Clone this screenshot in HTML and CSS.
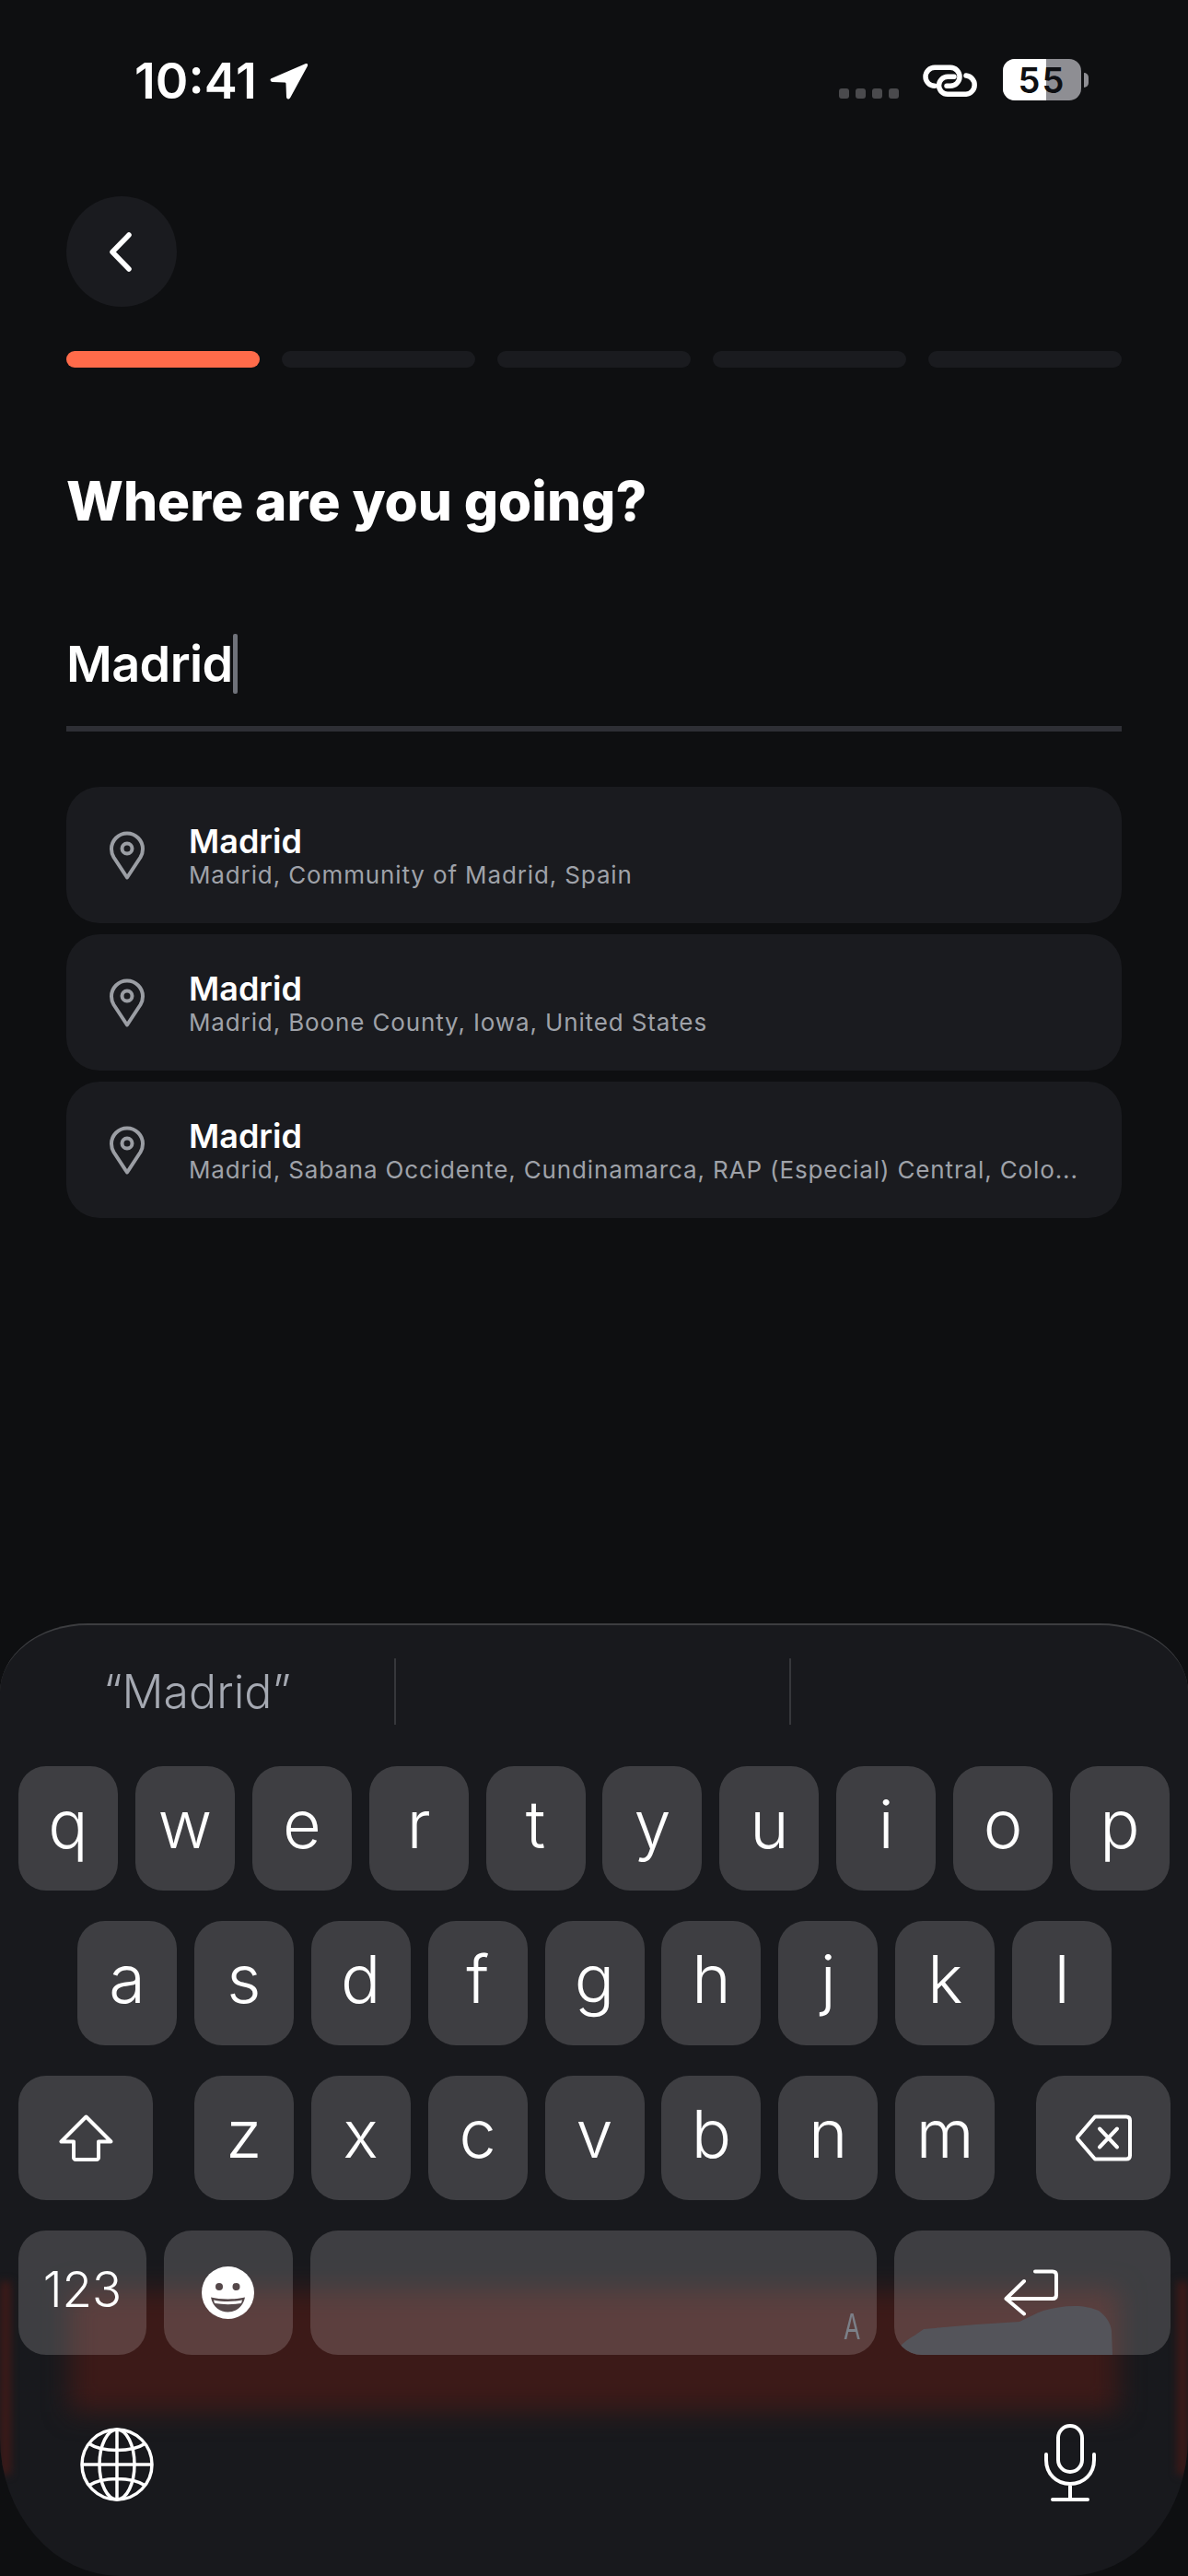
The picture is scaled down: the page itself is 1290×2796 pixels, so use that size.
FILE: index.html
```html
<!DOCTYPE html>
<html lang="en">
<head>
    <meta charset="UTF-8">
    <title>Where are you going?</title>
    <link rel="stylesheet" href="styles.css">
</head>
<body>
    <div class="status-bar">
        <div class="status-left">
            <span class="time">10:41</span>
            <svg class="location-icon" viewBox="0 0 43 40"><path d="M38.500 1.300C40.500 .5 41.500 1.500 41 3.500L22.500 37.500C21 40.500 18 40 18 37L17.500 23C17.500 22 17 21.500 16 21.500L3 21C.5 21 -.5 18 2 17Z" fill="#fff"/></svg>
        </div>
        <div class="status-right">
            <div class="signal-dots"><i></i><i></i><i></i><i></i></div>
            <svg class="link-icon" viewBox="0 0 61 36" fill="none" stroke="#fff" stroke-width="5.500" stroke-linecap="round"><path d="M13 23.300A10 10 0 0 1 13 3.300H30A10 10 0 0 1 30 23.300H26"/><path d="M47 12A10.200 10.200 0 0 1 47 32.300H27A9.500 9.500 0 0 1 27 13.300H34"/></svg>
            <div class="battery">
                <div class="battery-body"><span class="battery-level"></span><span class="battery-text">55</span></div>
                <span class="battery-cap"></span>
            </div>
        </div>
    </div>

    <main class="content">
        <button class="back-button" type="button">
            <svg class="back-icon" viewBox="0 0 24 43" fill="none" stroke="#fff" stroke-width="5.500" stroke-linecap="round" stroke-linejoin="round"><path d="M21 3L3 21.500 21 40"/></svg>
        </button>

        <div class="progress">
            <span class="progress-step active"></span>
            <span class="progress-step"></span>
            <span class="progress-step"></span>
            <span class="progress-step"></span>
            <span class="progress-step"></span>
        </div>

        <h1 class="title">Where are you going?</h1>

        <div class="search-field">
            <span class="search-value">Madrid</span><span class="caret"></span>
        </div>

        <ul class="results">
            <li class="result-card">
                <svg class="pin-icon" viewBox="0 0 38 53" fill="none" stroke="#9b9ea4" stroke-width="4"><path d="M19 50.500L4.500 28.500C2.800 25.600 2 23 2 19.500A17 17 0 0 1 36 19.500C36 23 35.200 25.600 33.500 28.500Z" stroke-linejoin="round"/><circle cx="19" cy="19" r="5.500"/></svg>
                <div class="result-text">
                    <div class="result-name">Madrid</div>
                    <div class="result-detail">Madrid, Community of Madrid, Spain</div>
                </div>
            </li>
            <li class="result-card">
                <svg class="pin-icon" viewBox="0 0 38 53" fill="none" stroke="#9b9ea4" stroke-width="4"><path d="M19 50.500L4.500 28.500C2.800 25.600 2 23 2 19.500A17 17 0 0 1 36 19.500C36 23 35.200 25.600 33.500 28.500Z" stroke-linejoin="round"/><circle cx="19" cy="19" r="5.500"/></svg>
                <div class="result-text">
                    <div class="result-name">Madrid</div>
                    <div class="result-detail">Madrid, Boone County, Iowa, United States</div>
                </div>
            </li>
            <li class="result-card">
                <svg class="pin-icon" viewBox="0 0 38 53" fill="none" stroke="#9b9ea4" stroke-width="4"><path d="M19 50.500L4.500 28.500C2.800 25.600 2 23 2 19.500A17 17 0 0 1 36 19.500C36 23 35.200 25.600 33.500 28.500Z" stroke-linejoin="round"/><circle cx="19" cy="19" r="5.500"/></svg>
                <div class="result-text">
                    <div class="result-name">Madrid</div>
                    <div class="result-detail">Madrid, Sabana Occidente, Cundinamarca, RAP (Especial) Central, Colo...</div>
                </div>
            </li>
        </ul>
    </main>

    <section class="keyboard">
        <!-- blurred button behind the keyboard -->
        <div class="glow"></div>
        <div class="glow-edge left"></div>
        <div class="glow-edge right"></div>

        <div class="suggestions">
            <div class="suggestion">“Madrid”</div>
            <div class="suggestion"></div>
            <div class="suggestion"></div>
        </div>

        <div class="key-rows">
            <div class="key-row">
                <span class="key">q</span><span class="key">w</span><span class="key">e</span><span class="key">r</span><span class="key">t</span><span class="key">y</span><span class="key">u</span><span class="key">i</span><span class="key">o</span><span class="key">p</span>
            </div>
            <div class="key-row centered">
                <span class="key">a</span><span class="key">s</span><span class="key">d</span><span class="key">f</span><span class="key">g</span><span class="key">h</span><span class="key">j</span><span class="key">k</span><span class="key">l</span>
            </div>
            <div class="key-row spread">
                <span class="key wide">
                    <svg class="shift-icon" viewBox="0 0 59 51" fill="none" stroke="#fff" stroke-width="4" stroke-linejoin="round"><path d="M29.500 2.500L2.500 29.500H16V47C16 48 17 49 18 49H41C42 49 43 48 43 47V29.500H56.500Z"/></svg>
                </span>
                <div class="letter-group">
                    <span class="key">z</span><span class="key">x</span><span class="key">c</span><span class="key">v</span><span class="key">b</span><span class="key">n</span><span class="key">m</span>
                </div>
                <span class="key wide">
                    <svg class="delete-icon" viewBox="0 0 61 51" fill="none" stroke="#fff" stroke-width="4" stroke-linecap="round" stroke-linejoin="round"><path d="M21 2.500H55C57.500 2.500 59 4 59 6.500V44.500C59 47 57.500 48.500 55 48.500H21L2.500 27C1.800 26 1.800 25 2.500 24Z"/><path d="M26 15.500L45 35.500M45 15.500L26 35.500"/></svg>
                </span>
            </div>
            <div class="key-row">
                <span class="key numbers">123</span>
                <span class="key emoji">
                    <svg class="emoji-icon" viewBox="0 0 57 57"><circle cx="28.500" cy="28.500" r="28.500" fill="#fff"/><circle cx="19" cy="22" r="4" fill="#55484a"/><circle cx="37.500" cy="22" r="4" fill="#55484a"/><path d="M10 33.500C20 36 37 36 47 33.500C45 44 37 49.500 28.500 49.500C20 49.500 12 44 10 33.500Z" fill="#55484a"/><path d="M13 36.500C23 38.500 34 38.500 44 36.500L43 40C33 41.500 24 41.500 14 40Z" fill="#fff"/></svg>
                </span>
                <span class="key space"><span class="space-mark">A</span></span>
                <span class="key enter">
                    <svg class="enter-blob" viewBox="0 0 300 135"><path d="M4 135L6 126C10 122 16 117 22 114L32 107L89 102L136 99C145 95 153 90 162 87C172 84 184 82 196 82C206 82 215 84 222 87C230 93 235 100 236 109L237 135Z" fill="#54545a"/></svg>
                    <svg class="enter-icon" viewBox="0 0 59 51" fill="none" stroke="#fff" stroke-width="4" stroke-linecap="round" stroke-linejoin="round"><path d="M34 2.500H53C55.500 2.500 57 4 57 6.500V28C57 30.500 55.500 32 53 32H3"/><path d="M22 13L2.500 32 22 48.500"/></svg>
                </span>
            </div>
        </div>

        <div class="keyboard-bottom">
            <svg class="globe-icon" viewBox="0 0 80 80" fill="none" stroke="#fff" stroke-width="3.500"><circle cx="40" cy="40" r="38"/><ellipse cx="40" cy="40" rx="19" ry="38"/><path d="M40 2V78M2 40H78M9 17C24 27 56 27 71 17M9 63C24 53 56 53 71 63"/></svg>
            <svg class="mic-icon" viewBox="0 0 56 84" fill="none" stroke="#fff" stroke-width="4" stroke-linecap="round"><rect x="15" y="2" width="26" height="50" rx="13"/><path d="M2 33V39C2 54 13 65 28 65C43 65 54 54 54 39V33M28 65V81M9 82H47"/></svg>
        </div>
    </section>
</body>
</html>
```

FILE: styles.css
```css
* {
    box-sizing: border-box;
}
html, body {
    margin: 0;
    padding: 0;
}
body {
    width: 1290px;
    height: 2796px;
    overflow: hidden;
    display: flex;
    flex-direction: column;
    background-color: #0e0f11;
    font-family: Inter, "Noto Sans", sans-serif;
    color: #ffffff;
}

/* status bar */
.status-bar {
    height: 213px;
    padding: 64px 108px 0 146px;
    display: flex;
    justify-content: space-between;
    align-items: flex-start;
}
.status-left {
    display: flex;
    align-items: center;
    gap: 14px;
    height: 48px;
}
.time {
    font-size: 54px;
    font-weight: 600;
    line-height: 48px;
}
.location-icon {
    width: 43px;
    height: 40px;
}
.status-right {
    display: flex;
    align-items: flex-start;
}
.signal-dots {
    display: flex;
    gap: 7px;
    margin-top: 32px;
    margin-right: 26px;
}
.signal-dots i {
    width: 11px;
    height: 11px;
    border-radius: 3px;
    background-color: #4a4a4d;
}
.link-icon {
    width: 61px;
    height: 36px;
    margin-top: 6px;
    margin-right: 26px;
}
.battery {
    display: flex;
    align-items: center;
    height: 45px;
    gap: 3px;
}
.battery-body {
    position: relative;
    width: 85px;
    height: 45px;
    border-radius: 13px;
    overflow: hidden;
    background-color: #8e8e93;
    display: flex;
    align-items: center;
    justify-content: center;
}
.battery-level {
    position: absolute;
    left: 0;
    top: 0;
    bottom: 0;
    width: 47px;
    background-color: #ffffff;
}
.battery-text {
    position: relative;
    font-size: 38px;
    font-weight: 600;
    color: #0e0f12;
    letter-spacing: 2px;
}
.battery-cap {
    width: 5px;
    height: 16px;
    border-radius: 0 8px 8px 0;
    background-color: #8e8e93;
}

/* page content */
.content {
    padding: 0 72px;
}
.back-button {
    width: 120px;
    height: 120px;
    border: none;
    padding: 0;
    border-radius: 50%;
    background-color: #1a1b1f;
    display: flex;
    align-items: center;
    justify-content: center;
}
.back-icon {
    width: 24px;
    height: 43px;
    margin-right: 2px;
}
.progress {
    display: flex;
    gap: 24px;
    margin-top: 48px;
}
.progress-step {
    flex: 1;
    height: 18px;
    border-radius: 9px;
    background-color: #1a1b1f;
}
.progress-step.active {
    background-color: #ff6b4a;
}
.title {
    margin: 110px 0 0;
    font-size: 58.5px;
    font-weight: 800;
    line-height: 70px;
}
.search-field {
    margin-top: 109px;
    height: 106px;
    border-bottom: 6px solid #2e2f35;
    display: flex;
    align-items: flex-start;
}
.search-value {
    font-size: 54px;
    font-weight: 600;
    line-height: 66px;
    letter-spacing: -0.6px;
}
.caret {
    width: 5px;
    height: 65px;
    border-radius: 2px;
    background-color: #6f727a;
}
.results {
    list-style: none;
    margin: 60px 0 0;
    padding: 0;
    display: flex;
    flex-direction: column;
    gap: 12px;
}
.result-card {
    height: 148px;
    border-radius: 36px;
    background-color: #1a1b1f;
    display: flex;
    align-items: center;
    padding: 0 40px 0 47px;
    gap: 48px;
}
.pin-icon {
    width: 38px;
    height: 53px;
    flex-shrink: 0;
}
.result-text {
    min-width: 0;
    flex: 1;
    padding-top: 3px;
}
.result-name {
    font-size: 36px;
    font-weight: 600;
    line-height: 40px;
}
.result-detail {
    font-size: 26px;
    line-height: 34px;
    letter-spacing: 0.87px;
    color: #9fa2a9;
    white-space: nowrap;
}

/* keyboard */
.keyboard {
    position: relative;
    margin-top: auto;
    height: 1034px;
    overflow: hidden;
    background-color: #18191d;
    border-radius: 95px 95px 130px 130px / 75px 75px 150px 150px;
    border-top: 2px solid #3c3d40;
}
.glow {
    position: absolute;
    left: 76px;
    right: 76px;
    top: 722px;
    height: 132px;
    background-color: #3c1a18;
    filter: blur(14px);
}
.glow-edge {
    position: absolute;
    top: 712px;
    height: 210px;
    width: 12px;
    background-color: #3c1a18;
    filter: blur(4px);
}
.glow-edge.left {
    left: 0;
}
.glow-edge.right {
    right: 0;
}
.suggestions {
    position: relative;
    display: grid;
    grid-template-columns: 430px 429px 1fr;
    margin-top: 36px;
    height: 72px;
}
.suggestion {
    display: flex;
    align-items: center;
    justify-content: center;
    font-size: 50px;
    font-weight: 300;
    color: #a5a9b2;
    border-right: 2px solid #36373b;
}
.suggestion:last-child {
    border-right: none;
}
.key-rows {
    position: relative;
    display: flex;
    flex-direction: column;
    gap: 33px;
    margin-top: 45px;
    padding: 0 19px 0 20px;
}
.key-row {
    display: flex;
    gap: 18.9px;
}
.key-row.centered {
    justify-content: center;
}
.key-row.spread {
    justify-content: space-between;
}
.letter-group {
    display: flex;
    gap: 18.9px;
}
.key {
    position: relative;
    width: 108px;
    height: 135px;
    border-radius: 30px;
    background-color: rgba(255, 255, 255, 0.165);
    display: flex;
    align-items: center;
    justify-content: center;
    font-size: 72px;
    font-weight: 350;
    line-height: 1;
    padding-bottom: 10px;
}
.key.wide {
    width: 146px;
    padding-bottom: 0;
}
.key.numbers {
    width: 139px;
    font-size: 53px;
    padding-bottom: 6px;
}
.key.emoji {
    width: 140px;
    padding-bottom: 0;
}
.key.space {
    width: 616px;
    align-items: flex-end;
    justify-content: flex-end;
    padding: 0 14px 12px 0;
}
.space-mark {
    font-size: 38px;
    font-weight: 400;
    color: #7c8088;
    transform: scaleX(0.7);
}
.key.enter {
    width: 300px;
    padding-bottom: 0;
    overflow: hidden;
}
.enter-blob {
    position: absolute;
    left: 0;
    top: 0;
    width: 300px;
    height: 135px;
}
.shift-icon {
    width: 59px;
    height: 51px;
}
.delete-icon {
    width: 61px;
    height: 51px;
}
.emoji-icon {
    width: 57px;
    height: 57px;
}
.enter-icon {
    position: relative;
    width: 59px;
    height: 51px;
    margin-right: 4px;
}
.keyboard-bottom {
    position: relative;
    display: flex;
    justify-content: space-between;
    align-items: flex-end;
    margin-top: 75px;
    padding: 0 100px 0 87px;
}
.globe-icon {
    width: 80px;
    height: 80px;
}
.mic-icon {
    width: 56px;
    height: 84px;
}
```
